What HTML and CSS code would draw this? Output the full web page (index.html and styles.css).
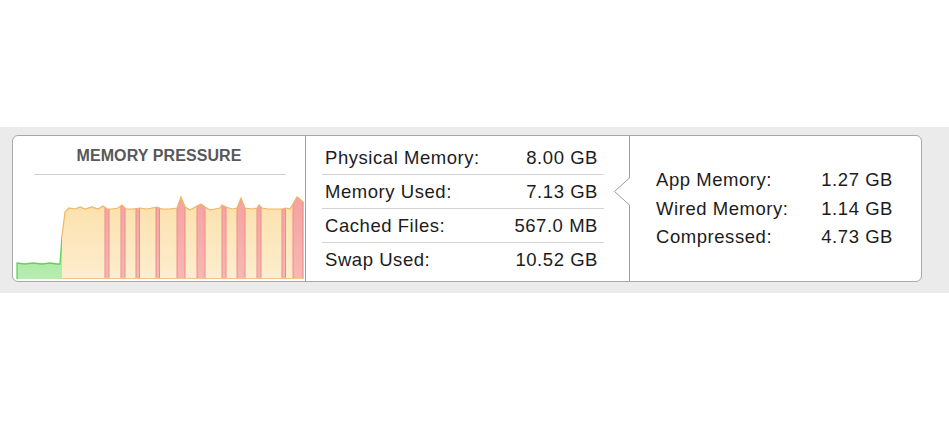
FILE: index.html
```html
<!DOCTYPE html>
<html>
<head>
<meta charset="utf-8">
<link rel="stylesheet" href="styles.css">
</head>
<body>
<div class="band">
  <div class="box">
    <section class="pressure">
      <div class="title">MEMORY PRESSURE</div>
      <div class="rule"></div>
      <svg class="graph" viewBox="13 186 292 95" width="292" height="95">
        <defs>
          <linearGradient id="yel" x1="0" y1="0" x2="0" y2="1">
            <stop offset="0" stop-color="#fbdea6"/>
            <stop offset="1" stop-color="#fdeecf"/>
          </linearGradient>
          <linearGradient id="red" x1="0" y1="0" x2="0" y2="1">
            <stop offset="0" stop-color="#f5a0a0"/>
            <stop offset="1" stop-color="#f8b8b2"/>
          </linearGradient>
          <linearGradient id="grn" x1="0" y1="0" x2="0" y2="1">
            <stop offset="0" stop-color="#9ee596"/>
            <stop offset="1" stop-color="#b8edb0"/>
          </linearGradient>
          <clipPath id="area">
            <polygon points="62,279 62,236 65,212 69,208 75,209 80,207 85,209 92,207 98,209 103,206 107,209 112,209 118,208 122,205 126,209 133,209 140,208 147,209 152,208 157,207 162,209 170,209 177,208 181,197 185,207 190,210 197,206 201,204 205,207 210,210 215,209 220,208 222,205 226,207 232,209 237,208 241,198 245,208 252,209 257,208 259,205 262,208 268,209 275,209 282,209 286,208 290,209 293,204 297,197 301,200 304,203 304,279"/>
          </clipPath>
        </defs>
        <polygon points="17,279 17,263 25,264 33,263 42,264 50,263 57,264 60,264 62,236 62,279" fill="url(#grn)"/>
        <polyline points="17,279 17,263 25,264 33,263 42,264 50,263 57,264 60,264 62,236" fill="none" stroke="#5fd35f" stroke-width="1.3"/>
        <g clip-path="url(#area)">
          <rect x="62" y="190" width="242" height="90" fill="url(#yel)"/>
          <g fill="url(#red)" stroke="#ef8b8b" stroke-width="1">
            <rect x="105" y="190" width="4" height="90"/>
            <rect x="121" y="190" width="4" height="90"/>
            <rect x="136" y="190" width="3.5" height="90"/>
            <rect x="156" y="190" width="3.5" height="90"/>
            <rect x="177" y="190" width="8" height="90"/>
            <rect x="197" y="190" width="8" height="90"/>
            <rect x="222" y="190" width="4" height="90"/>
            <rect x="237" y="190" width="8" height="90"/>
            <rect x="257" y="190" width="4" height="90"/>
            <rect x="282" y="190" width="3.5" height="90"/>
            <rect x="293" y="190" width="10" height="90"/>
          </g>
        </g>
        <polyline points="62,236 65,212 69,208 75,209 80,207 85,209 92,207 98,209 103,206 107,209 112,209 118,208 122,205 126,209 133,209 140,208 147,209 152,208 157,207 162,209 170,209 177,208 181,197 185,207 190,210 197,206 201,204 205,207 210,210 215,209 220,208 222,205 226,207 232,209 237,208 241,198 245,208 252,209 257,208 259,205 262,208 268,209 275,209 282,209 286,208 290,209 293,204 297,197 301,200 304,203" fill="none" stroke="#efb664" stroke-width="1.2"/>
        <line x1="62" y1="278.5" x2="304" y2="278.5" stroke="#f2c590" stroke-width="1"/>
      </svg>
    </section>
    <section class="usage">
      <div class="row"><span>Physical Memory:</span><span>8.00 GB</span></div>
      <div class="row"><span>Memory Used:</span><span>7.13 GB</span></div>
      <div class="row"><span>Cached Files:</span><span>567.0 MB</span></div>
      <div class="row"><span>Swap Used:</span><span>10.52 GB</span></div>
    </section>
    <section class="detail">
      <svg class="notch" viewBox="0 0 17 27" width="17" height="27">
        <rect x="14" y="0" width="4" height="27" fill="#fff"/>
        <polyline points="16.5,0 1.5,13.5 16.5,27" fill="none" stroke="#9d9d9d" stroke-width="1"/>
      </svg>
      <div class="grid">
        <span>App Memory:</span><span class="val">1.27 GB</span>
        <span>Wired Memory:</span><span class="val">1.14 GB</span>
        <span>Compressed:</span><span class="val">4.73 GB</span>
      </div>
    </section>
  </div>
</div>
</body>
</html>
```
FILE: styles.css
```css
html, body {
  margin: 0;
  padding: 0;
  background: #ffffff;
}
body {
  font-family: "Liberation Sans", Arial, sans-serif;
  color: #1c1c1c;
}
.band {
  margin-top: 127px;
  height: 166px;
  box-sizing: border-box;
  padding: 8px 0 0 12px;
  background: #ebebeb;
}
.box {
  display: flex;
  width: 910px;
  height: 147px;
  box-sizing: border-box;
  border: 1px solid #a8a8a8;
  border-radius: 6px;
  background: #ffffff;
}
.pressure {
  width: 292px;
  flex: none;
  display: flex;
  flex-direction: column;
  border-right: 1px solid #a0a0a0;
}
.title {
  margin-top: 10px;
  height: 20px;
  line-height: 20px;
  text-align: center;
  font-size: 16px;
  font-weight: bold;
  letter-spacing: 0.1px;
  color: #585858;
}
.rule {
  margin: 8px 19px 0 21px;
  height: 1px;
  background: #cfcfcf;
}
.graph {
  display: block;
  margin-top: auto;
}
.usage {
  width: 323px;
  flex: none;
  box-sizing: border-box;
  padding: 5px 25px 0 16px;
  font-size: 18.5px;
  letter-spacing: 0.55px;
}
.row {
  display: flex;
  justify-content: space-between;
  align-items: center;
  height: 33px;
  padding: 0 6px 0 3px;
  border-bottom: 1px solid #d2d2d2;
}
.row:last-child {
  border-bottom: none;
}
.detail {
  position: relative;
  flex: 1;
  display: flex;
  align-items: center;
  border-left: 1px solid #9d9d9d;
  font-size: 18.5px;
  letter-spacing: 0.55px;
}
.notch {
  position: absolute;
  left: -17px;
  top: 42px;
  display: block;
}
.grid {
  display: grid;
  grid-template-columns: 1fr auto;
  width: 237px;
  margin-left: 26px;
  margin-top: 1px;
  line-height: 28.5px;
}
.val {
  text-align: right;
}
```
